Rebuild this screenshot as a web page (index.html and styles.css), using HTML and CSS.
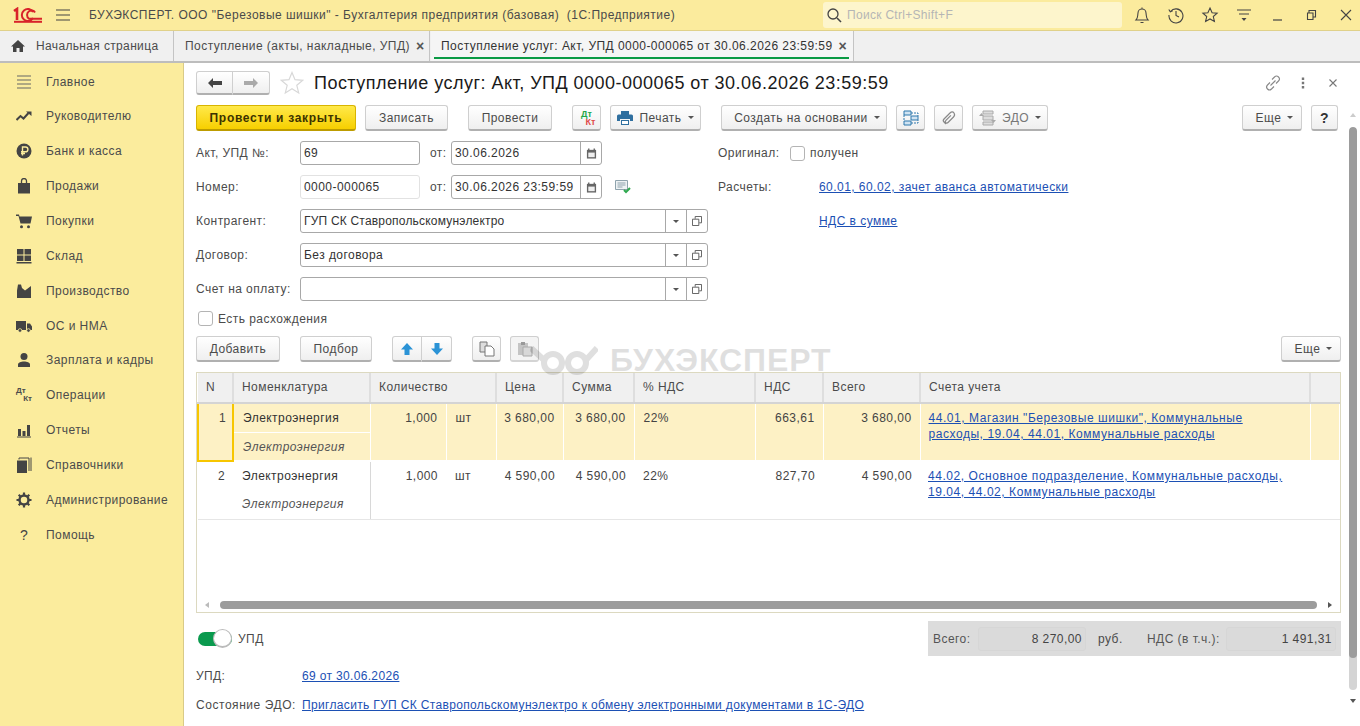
FILE: index.html
```html
<!DOCTYPE html>
<html lang="ru">
<head>
    <meta charset="UTF-8">
    <title>Поступление услуг</title>
    <link rel="stylesheet" href="styles.css">
</head>
<body>
<header class="topbar">
    <svg class="logo" width="30" height="16" viewBox="0 0 30 16"><g fill="none" stroke="#d8232a" stroke-width="2"><path d="M1 4l3-2v11" stroke-width="2.600"/><path d="M20 5a6 6 0 1 0 0 6"/><path d="M22 5.500a4 4 0 0 0-6-1.200a4.500 4.500 0 0 0 0 7.400h13"/><path d="M1 14.800h28"/></g></svg>
    <svg class="burger" width="16" height="12" viewBox="0 0 16 12"><path d="M1 1h14M1 6h14M1 11h14" stroke="#444" stroke-width="1.200"/></svg>
    <span class="app-title">БУХЭКСПЕРТ. ООО "Березовые шишки" - Бухгалтерия предприятия (базовая)&nbsp; (1С:Предприятие)</span>
    <div class="search">
        <svg width="16" height="16" viewBox="0 0 16 16"><circle cx="7" cy="7" r="5" fill="none" stroke="#444" stroke-width="1.300"/><path d="M11 11l4 4" stroke="#444" stroke-width="1.600"/></svg>
        <span>Поиск Ctrl+Shift+F</span>
    </div>
    <div class="top-icons">
        <svg width="18" height="18" viewBox="0 0 18 18"><path d="M3 14c2-2 1.500-4 2-7a4 4 0 0 1 8 0c.5 3 0 5 2 7zM7.500 16.500h3M9 1.500v1.500" fill="none" stroke="#444" stroke-width="1.100"/></svg>
        <svg width="18" height="18" viewBox="0 0 18 18"><path d="M3.500 5.500A7 7 0 1 1 2 9M1.800 3.500l1.500 2.300 2.400-1M9 5v4.500l3 1.500" fill="none" stroke="#444" stroke-width="1.100"/></svg>
        <svg width="18" height="18" viewBox="0 0 18 18"><path d="M9 2l2.100 4.700 5 .5-3.800 3.300 1.100 5L9 13l-4.400 2.500 1.100-5L1.900 7.200l5-.5z" fill="none" stroke="#444" stroke-width="1.100"/></svg>
        <svg width="18" height="18" viewBox="0 0 18 18"><path d="M2 4h14M4 8h10" stroke="#444" stroke-width="1.100"/><path d="M6.500 12h5L9 15z" fill="#444"/></svg>
        <svg width="18" height="18" viewBox="0 0 18 18"><path d="M4 14h9" stroke="#444" stroke-width="1.200"/></svg>
        <svg width="18" height="18" viewBox="0 0 18 18"><path d="M6 7V4.500h6.500V11H10M4.500 7H10v6.500H4.500z" fill="none" stroke="#444" stroke-width="1.100"/></svg>
        <svg width="18" height="18" viewBox="0 0 18 18"><path d="M4 4l10 10M14 4L4 14" stroke="#444" stroke-width="1.100"/></svg>
    </div>
</header>

<nav class="tabs">
    <div class="tab tab-home">
        <svg width="14" height="14" viewBox="0 0 14 14"><path d="M7 1L0 7.500h2V13h3.500V9h3v4H12V7.500h2z" fill="#444"/></svg>
        <span>Начальная страница</span>
    </div>
    <div class="tab tab-list"><span>Поступление (акты, накладные, УПД)</span><i class="tab-close">×</i></div>
    <div class="tab tab-active"><span>Поступление услуг: Акт, УПД 0000-000065 от 30.06.2026 23:59:59</span><i class="tab-close">×</i></div>
</nav>

<div class="content">
    <aside class="sidebar">
        <div class="side-item"><svg viewBox="0 0 16 16"><path d="M1 2h14M1 6h14M1 10h14M1 14h14" stroke="#666" stroke-width="1.200"/></svg><span>Главное</span></div>
        <div class="side-item"><svg viewBox="0 0 16 16"><path d="M0.500 12l4-4 3 2.500 5-5.500" fill="none" stroke="#444" stroke-width="2"/><path d="M10 3.500h5.500v4.500z" fill="#444"/></svg><span>Руководителю</span></div>
        <div class="side-item"><svg viewBox="0 0 16 16"><circle cx="8" cy="8" r="7.500" fill="#444"/><path d="M6.500 12.500V4h3a2.200 2.200 0 0 1 0 4.800h-4.500M5 10.500h4" fill="none" stroke="#fbec9d" stroke-width="1.400"/></svg><span>Банк и касса</span></div>
        <div class="side-item"><svg viewBox="0 0 16 16"><path d="M2 5h12v10.500H2z" fill="#444"/><path d="M5.500 7V3a2.500 2.500 0 0 1 5 0v4" fill="none" stroke="#444" stroke-width="1.300"/></svg><span>Продажи</span></div>
        <div class="side-item"><svg viewBox="0 0 16 16"><path d="M0 1.500h3l.5 2h12.500l-1.500 7h-10L2.500 3H0z" fill="#444"/><circle cx="5.500" cy="13.800" r="1.500" fill="#444"/><circle cx="12.500" cy="13.800" r="1.500" fill="#444"/></svg><span>Покупки</span></div>
        <div class="side-item"><svg viewBox="0 0 16 16"><path d="M1 1h6.500v5.500H1zM8.500 1H15v5.500H8.500zM1 7.500h6.500V13H1zM8.500 7.500H15V13H8.500zM0.500 14h15v1.500H.5z" fill="#444"/></svg><span>Склад</span></div>
        <div class="side-item"><svg viewBox="0 0 16 16"><path d="M1 15V7.500l1-6h3l1 3.500 3 2.500L15 3v12z" fill="#444"/></svg><span>Производство</span></div>
        <div class="side-item"><svg viewBox="0 0 16 16"><path d="M0 3h10v9H0zM11 5.500h3l2 3V12h-5z" fill="#444"/><circle cx="4" cy="12.500" r="1.800" fill="#444" stroke="#fbec9d" stroke-width=".8"/><circle cx="12.500" cy="12.500" r="1.800" fill="#444" stroke="#fbec9d" stroke-width=".8"/></svg><span>ОС и НМА</span></div>
        <div class="side-item"><svg viewBox="0 0 16 16"><circle cx="8" cy="4.500" r="3.500" fill="#444"/><path d="M2 15v-2.500c0-2 3-3 6-3s6 1 6 3V15z" fill="#444"/></svg><span>Зарплата и кадры</span></div>
        <div class="side-item"><div class="dtkt"><b>Дт</b><b>Кт</b></div><span>Операции</span></div>
        <div class="side-item"><svg viewBox="0 0 16 16"><path d="M2 7h3v7H2zM6.500 9h3v5h-3zM11 3h3v11h-3zM1 14.500h14v1H1z" fill="#444"/></svg><span>Отчеты</span></div>
        <div class="side-item"><svg viewBox="0 0 16 16"><path d="M1 3.500h10V16H1z" fill="#444"/><path d="M3 2.500V1h10v13M15 .5V14" fill="none" stroke="#444"/></svg><span>Справочники</span></div>
        <div class="side-item"><svg viewBox="0 0 16 16"><circle cx="8" cy="8" r="4.500" fill="none" stroke="#444" stroke-width="2.500"/><path d="M8 0.500v3M8 12.500v3M.5 8h3M12.500 8h3M2.700 2.700l2 2M11.300 11.300l2 2M13.300 2.700l-2 2M4.700 11.300l-2 2" stroke="#444" stroke-width="2.200"/></svg><span>Администрирование</span></div>
        <div class="side-item"><b class="side-help">?</b><span>Помощь</span></div>
    </aside>

    <main class="doc-wrap">
        <div class="watermark">
            <svg width="68" height="30" viewBox="0 0 68 30"><g fill="none" stroke="#000" stroke-width="6"><circle cx="23" cy="17" r="9"/><circle cx="47" cy="17" r="9"/><path d="M14 14L1 2M56 14L67 2"/></g></svg>
            <span>БУХЭКСПЕРТ</span>
        </div>
        <div class="doc">
            <div class="title-bar">
                <div class="btn-pair nav-pair">
                    <button class="btn"><svg width="14" height="10" viewBox="0 0 14 10"><path d="M0 5l5-5v3h9v4H5v3z" fill="#444"/></svg></button>
                    <button class="btn"><svg width="14" height="10" viewBox="0 0 14 10"><path d="M14 5L9 0v3H0v4h9v3z" fill="#aaa"/></svg></button>
                </div>
                <svg class="title-star" width="24" height="24" viewBox="0 0 24 24"><path d="M12 1.500l3 7.200 7.800.6-6 5 1.900 7.600L12 17.800l-6.700 4.100 1.900-7.600-6-5 7.800-.6z" fill="none" stroke="#d8d8d8" stroke-width="1.200"/></svg>
                <h1>Поступление услуг: Акт, УПД 0000-000065 от 30.06.2026 23:59:59</h1>
                <div class="title-icons">
                    <svg width="16" height="16" viewBox="0 0 16 16"><path d="M7 4.500l2.500-2.500a2.800 2.800 0 0 1 4 4L11 8.500M9 11.500L6.500 14a2.800 2.800 0 0 1-4-4L5 7.500M5.500 10.500l5-5" fill="none" stroke="#888" stroke-width="1.100"/></svg>
                    <svg width="16" height="16" viewBox="0 0 16 16"><path d="M6.800 2.500h2.400v2.400H6.800zM6.800 6.800h2.400v2.400H6.800zM6.800 11.100h2.400v2.400H6.800z" fill="#777"/></svg>
                    <svg width="16" height="16" viewBox="0 0 16 16"><path d="M4.500 4.500l7 7M11.500 4.500l-7 7" stroke="#777" stroke-width="1.100"/></svg>
                </div>
            </div>

            <div class="toolbar">
                <button class="btn btn-primary w-post">Провести и закрыть</button>
                <button class="btn w-save">Записать</button>
                <button class="btn w-run group">Провести</button>
                <button class="btn btn-icon group"><span class="dtkt color"><b>Дт</b><b>Кт</b></span></button>
                <button class="btn w-print"><svg width="16" height="14" viewBox="0 0 16 14"><path d="M4 0h8v4H4zM0 5a1.500 1.500 0 0 1 1.500-1.500h13A1.500 1.500 0 0 1 16 5v5h-3V8H3v2H0z" fill="#2f6f9f"/><path d="M4 9h8v5H4z" fill="#2f6f9f"/><path d="M5 10h6v3H5z" fill="#fff"/></svg><span>Печать</span><i class="caret"></i></button>
                <button class="btn w-create group"><span>Создать на основании</span><i class="caret"></i></button>
                <button class="btn btn-icon"><svg width="16" height="16" viewBox="0 0 16 16"><path d="M1 1h7v4H1zM8 6h7v4H8zM1 11h7v4H1z" fill="#cfe3f2" stroke="#2f78ad"/><path d="M8 3h7v3M8 13h7v-3M1 5v6" fill="none" stroke="#2f78ad" stroke-dasharray="2 1"/></svg></button>
                <button class="btn btn-icon"><svg width="16" height="16" viewBox="0 0 16 16"><path d="M5 14l-2-2c-1-1-1-2 0-3l6-6c1.500-1.500 3-1.500 4 0s1 2.500-.5 4l-5.500 5.500c-.8.800-1.500.800-2.200.1s-.7-1.400.1-2.200l5-5" fill="none" stroke="#888" stroke-width="1.200"/></svg></button>
                <button class="btn w-edo"><svg width="17" height="16" viewBox="0 0 17 16"><path d="M4 1h10v3H4zM4 6h10v4H4zM4 12h10v3H4z" fill="#ddd" stroke="#aaa"/><path d="M0 6l2.500-3L5 6zM12 10h5l-2.500 3z" fill="#aaa"/></svg><span>ЭДО</span><i class="caret"></i></button>
                <div class="spacer"></div>
                <button class="btn w-more"><span>Еще</span><i class="caret"></i></button>
                <button class="btn btn-help">?</button>
            </div>

            <div class="head">
                <div class="head-left">
                    <div class="row">
                        <label class="lbl">Акт, УПД №:</label>
                        <div class="field w-num">69</div>
                        <label class="lbl-from">от:</label>
                        <div class="field w-date"><span class="val">30.06.2026</span><span class="fbtn"><svg width="11" height="11" viewBox="0 0 12 12"><path d="M1 2h10v9.500H1z" fill="#666"/><path d="M2.500 5h7v5h-7z" fill="#eee"/><path d="M3 .5v2M9 .5v2" stroke="#666" stroke-width="1.500"/></svg></span></div>
                    </div>
                    <div class="row">
                        <label class="lbl">Номер:</label>
                        <div class="field w-num field-soft">0000-000065</div>
                        <label class="lbl-from">от:</label>
                        <div class="field w-date"><span class="val">30.06.2026 23:59:59</span><span class="fbtn"><svg width="11" height="11" viewBox="0 0 12 12"><path d="M1 2h10v9.500H1z" fill="#666"/><path d="M2.500 5h7v5h-7z" fill="#eee"/><path d="M3 .5v2M9 .5v2" stroke="#666" stroke-width="1.500"/></svg></span></div>
                        <svg class="note-ok" width="16" height="14" viewBox="0 0 16 14"><path d="M.5.500h12v9h-12z" fill="#eef2f4" stroke="#8fa3ad"/><path d="M2.500 3h8M2.500 5h8M2.500 7h5" stroke="#8fa3ad"/><path d="M9 10l2 2 4-4" fill="none" stroke="#2fa84f" stroke-width="2"/></svg>
                    </div>
                    <div class="row">
                        <label class="lbl">Контрагент:</label>
                        <div class="field w-select"><span class="val val-tight">ГУП СК Ставропольскомунэлектро</span><span class="fbtn fbtn-caret"><i class="caret"></i></span><span class="fbtn fbtn-open"><svg width="10" height="10" viewBox="0 0 11 11"><path d="M3.500 3V.5h7v7H8M.5 3.500h7v7h-7z" fill="none" stroke="#555"/></svg></span></div>
                    </div>
                    <div class="row">
                        <label class="lbl">Договор:</label>
                        <div class="field w-select"><span class="val">Без договора</span><span class="fbtn fbtn-caret"><i class="caret"></i></span><span class="fbtn fbtn-open"><svg width="10" height="10" viewBox="0 0 11 11"><path d="M3.500 3V.5h7v7H8M.5 3.500h7v7h-7z" fill="none" stroke="#555"/></svg></span></div>
                    </div>
                    <div class="row">
                        <label class="lbl">Счет на оплату:</label>
                        <div class="field w-select"><span class="val"></span><span class="fbtn fbtn-caret"><i class="caret"></i></span><span class="fbtn fbtn-open"><svg width="10" height="10" viewBox="0 0 11 11"><path d="M3.500 3V.5h7v7H8M.5 3.500h7v7h-7z" fill="none" stroke="#555"/></svg></span></div>
                    </div>
                    <div class="row row-check">
                        <span class="check"></span>
                        <span class="check-text">Есть расхождения</span>
                    </div>
                </div>
                <div class="head-right">
                    <div class="row">
                        <label class="lbl-right lbl-orig">Оригинал:</label>
                        <span class="check"></span>
                        <span class="check-text">получен</span>
                    </div>
                    <div class="row">
                        <label class="lbl-right">Расчеты:</label>
                        <a class="link" href="#">60.01, 60.02, зачет аванса автоматически</a>
                    </div>
                    <div class="row">
                        <label class="lbl-right"></label>
                        <a class="link" href="#">НДС в сумме</a>
                    </div>
                </div>
            </div>

            <div class="toolbar table-tools">
                <button class="btn w-add">Добавить</button>
                <button class="btn w-pick group">Подбор</button>
                <div class="btn-pair arrows group">
                    <button class="btn"><svg width="14" height="14" viewBox="0 0 14 14"><path d="M7 1l6 6.500H9.500V13h-5V7.500H1z" fill="#2b93d6"/></svg></button>
                    <button class="btn"><svg width="14" height="14" viewBox="0 0 14 14"><path d="M7 13L1 6.500h3.500V1h5v5.500H13z" fill="#2b93d6"/></svg></button>
                </div>
                <button class="btn btn-icon group"><svg width="16" height="16" viewBox="0 0 16 16"><path d="M1 1h7v10H1z" fill="#ddd" stroke="#777"/><path d="M6 5h6l3 3v7H6z" fill="#fff" stroke="#777"/></svg></button>
                <button class="btn btn-icon btn-off"><svg width="16" height="16" viewBox="0 0 16 16"><path d="M1 2h10v12H1z" fill="#c4c4c4"/><path d="M4 1h4v3H4z" fill="#999"/><path d="M6 6h9v9H6z" fill="#d8d8d8" stroke="#aaa"/></svg></button>
                <div class="spacer"></div>
                <button class="btn w-more"><span>Еще</span><i class="caret"></i></button>
            </div>

            <div class="grid-box">
                <table class="grid">
                    <colgroup>
                        <col class="c-n"><col class="c-name"><col class="c-qty"><col class="c-unit"><col class="c-price"><col class="c-sum"><col class="c-rate"><col class="c-vat"><col class="c-total"><col class="c-acc"><col>
                    </colgroup>
                    <thead>
                        <tr><th>N</th><th>Номенклатура</th><th colspan="2">Количество</th><th>Цена</th><th>Сумма</th><th>% НДС</th><th>НДС</th><th>Всего</th><th>Счета учета</th><th></th></tr>
                    </thead>
                    <tbody>
                        <tr class="sel">
                            <td rowspan="2" class="num cur">1</td><td class="name">Электроэнергия</td>
                            <td rowspan="2" class="num">1,000</td><td rowspan="2">шт</td>
                            <td rowspan="2" class="num">3 680,00</td><td rowspan="2" class="num">3 680,00</td>
                            <td rowspan="2">22%</td><td rowspan="2" class="num">663,61</td><td rowspan="2" class="num">3 680,00</td>
                            <td rowspan="2" class="acc"><a class="link" href="#">44.01, Магазин "Березовые шишки", Коммунальные расходы, 19.04, 44.01, Коммунальные расходы</a></td>
                            <td rowspan="2"></td>
                        </tr>
                        <tr class="sel"><td class="name sub">Электроэнергия</td></tr>
                        <tr class="plain">
                            <td rowspan="2" class="num">2</td><td class="name">Электроэнергия</td>
                            <td rowspan="2" class="num">1,000</td><td rowspan="2">шт</td>
                            <td rowspan="2" class="num">4 590,00</td><td rowspan="2" class="num">4 590,00</td>
                            <td rowspan="2">22%</td><td rowspan="2" class="num">827,70</td><td rowspan="2" class="num">4 590,00</td>
                            <td rowspan="2" class="acc"><a class="link" href="#">44.02, Основное подразделение, Коммунальные расходы, 19.04, 44.02, Коммунальные расходы</a></td>
                            <td rowspan="2"></td>
                        </tr>
                        <tr class="plain"><td class="name sub">Электроэнергия</td></tr>
                    </tbody>
                </table>
                <div class="hscroll">
                    <i class="arr arr-left"></i>
                    <div class="hthumb"></div>
                    <i class="arr arr-right"></i>
                </div>
            </div>

            <div class="bottom">
                <div class="switch-wrap">
                    <span class="switch"><i></i></span>
                    <span>УПД</span>
                </div>
                <div class="totals">
                    <span class="t-lbl t-all">Всего:</span>
                    <span class="t-val t-sum">8 270,00</span>
                    <span class="t-cur">руб.</span>
                    <span class="t-lbl t-vat">НДС (в т.ч.):</span>
                    <span class="t-val t-vatval">1 491,31</span>
                </div>
            </div>

            <div class="foot-row foot-upd"><label>УПД:</label><a class="link" href="#">69 от 30.06.2026</a></div>
            <div class="foot-row foot-edo"><label>Состояние ЭДО:</label><a class="link" href="#">Пригласить ГУП СК Ставропольскомунэлектро к обмену электронными документами в 1С-ЭДО</a></div>
        </div>

        <div class="vscroll">
            <i class="varr varr-up"></i>
            <div class="vtrack"><div class="vthumb"></div></div>
            <i class="varr varr-down"></i>
        </div>
    </main>
</div>
</body>
</html>
```

FILE: styles.css
```css
* {
    box-sizing: border-box;
}

html, body {
    margin: 0;
    height: 100%;
    overflow: hidden;
}

body {
    font-family: "Liberation Sans", Arial, sans-serif;
    font-size: 12px;
    letter-spacing: 0.45px;
    color: #4b4b4b;
    background: #fff;
    display: flex;
    flex-direction: column;
}

button {
    font: inherit;
    letter-spacing: inherit;
    color: inherit;
}

/* top bar */
.topbar {
    height: 31px;
    flex: none;
    display: flex;
    align-items: center;
    background: #fbeb9d;
    border-bottom: 1px solid #e0d18a;
    padding-left: 13px;
}

.logo {
    margin-right: 12px;
}

.burger {
    margin-right: 18px;
}

.app-title {
    color: #4a4a4a;
    width: 734px;
    white-space: nowrap;
    letter-spacing: 0.48px;
}

.search {
    width: 299px;
    height: 26px;
    background: #fdf5cc;
    border-radius: 3px;
    display: flex;
    align-items: center;
    gap: 5px;
    padding-left: 3px;
    color: #b5b5b5;
    letter-spacing: 0.3px;
}

.top-icons {
    display: flex;
    align-items: center;
    margin-left: 11px;
    gap: 16px;
}

/* tabs */
.tabs {
    height: 32px;
    flex: none;
    display: flex;
    background: #f0f0f0;
    border-bottom: 2px solid #bdbdbd;
}

.tab {
    display: flex;
    align-items: center;
    border-right: 1px solid #c4c4c4;
    white-space: nowrap;
    position: relative;
    margin-right: 1px;
}

.tab-home {
    width: 174px;
    padding-left: 11px;
    gap: 11px;
    letter-spacing: 0.35px;
}

.tab-list {
    width: 255px;
    padding-left: 10px;
}

.tab-active {
    width: 423px;
    padding-left: 10px;
    background: #f5f5f5;
    color: #333;
}

.tab-active::after {
    content: "";
    position: absolute;
    left: 3px;
    right: 4px;
    bottom: 2px;
    height: 2px;
    background: #0a9a44;
}

.tab-close {
    font-style: normal;
    font-weight: bold;
    font-size: 14px;
    margin-left: 6px;
    color: #555;
}

/* sidebar */
.content {
    flex: 1;
    display: flex;
    min-height: 0;
}

.sidebar {
    width: 184px;
    flex: none;
    background: #fbec9d;
    border-right: 1px solid #d9cb88;
    padding-top: 1.200px;
}

.side-item {
    height: 34.85px;
    display: flex;
    align-items: center;
    padding-left: 16px;
    gap: 14px;
    white-space: nowrap;
}

.side-item svg {
    width: 16px;
    height: 16px;
    flex: none;
}

.dtkt {
    width: 16px;
    flex: none;
    display: flex;
    flex-direction: column;
    font-size: 8px;
    line-height: 8px;
    letter-spacing: 0;
}

.dtkt b + b {
    align-self: flex-end;
}

.dtkt.color {
    font-size: 9px;
    width: 18px;
}

.dtkt.color b {
    color: #1ea84a;
}

.dtkt.color b + b {
    color: #e04a4a;
}

.side-help {
    width: 16px;
    text-align: center;
    font-size: 14px;
    color: #444;
    font-weight: normal;
}

/* document */
.doc-wrap {
    flex: 1;
    display: flex;
    position: relative;
    min-width: 0;
}

.doc {
    width: 1157px;
    padding: 8px 0 0 12px;
    flex: none;
}

.title-bar {
    height: 24px;
    display: flex;
    align-items: center;
}

.title-star {
    margin-left: 10px;
    margin-right: 10px;
}

h1 {
    margin: 0;
    font-size: 18px;
    font-weight: normal;
    color: #1a1a1a;
    white-space: nowrap;
    letter-spacing: 0.47px;
}

.title-icons {
    margin-left: auto;
    display: flex;
    gap: 14px;
}

.btn {
    height: 26px;
    padding: 0;
    background: linear-gradient(#fff, #efefef);
    border: 1px solid #cfcfcf;
    border-bottom: 2px solid #b0b0b0;
    border-radius: 3px;
    display: inline-flex;
    align-items: center;
    justify-content: center;
    gap: 6px;
    flex: none;
}

.btn-primary {
    background: linear-gradient(#ffe94a, #f7cf00);
    border-color: #d8b400;
    border-bottom-color: #bd9c00;
    color: #3c3300;
    font-weight: bold;
    letter-spacing: 0.7px;
}

.btn-pair {
    display: flex;
    flex: none;
}

.btn-pair .btn:first-child {
    border-radius: 3px 0 0 3px;
}

.btn-pair .btn:last-child {
    border-radius: 0 3px 3px 0;
    border-left: 0;
}

.nav-pair .btn {
    width: 37px;
    height: 24px;
}

.arrows .btn {
    width: 30px;
}

.toolbar {
    display: flex;
    height: 26px;
    margin-top: 10px;
    gap: 9px;
}

.group {
    margin-left: 11px;
}

.spacer {
    flex: 1;
}

.w-post { width: 160px; }
.w-save { width: 83px; }
.w-run { width: 84px; }
.btn-icon { width: 29px; }
.w-print { width: 91px; }
.w-create { width: 166px; padding-left: 6px; }
.w-edo { width: 76px; color: #777; }
.w-more { width: 60px; padding-left: 5px; }
.btn-help { width: 27px; margin-right: 3px; font-weight: bold; font-size: 14px; color: #333; }
.w-add { width: 84px; }
.w-pick { width: 72px; }

.btn-off {
    background: #f4f4f4;
    border-bottom-color: #d4d4d4;
}

.caret {
    display: inline-block;
    width: 0;
    height: 0;
    border-left: 3px solid transparent;
    border-right: 3px solid transparent;
    border-top: 3px solid #555;
}

/* header fields */
.head {
    display: flex;
    margin-top: 10px;
}

.head-left {
    width: 522px;
}

.row {
    height: 24px;
    display: flex;
    align-items: center;
    margin-bottom: 10px;
    white-space: nowrap;
}

.row-check {
    height: 15px;
    margin-bottom: 0;
    padding-left: 2px;
}

.lbl {
    width: 104px;
    flex: none;
}

.lbl-from {
    width: 31px;
    padding-left: 10px;
    flex: none;
}

.lbl-right {
    width: 101px;
    flex: none;
}

.lbl-orig {
    width: 72px;
}

.field {
    height: 24px;
    background: #fff;
    border: 1px solid #a8a8a8;
    border-radius: 3px;
    display: flex;
    align-items: center;
    padding-left: 3px;
    color: #333;
    flex: none;
}

.field-soft {
    border-color: #e2e2e2;
}

.w-num { width: 120px; }
.w-date { width: 151px; }
.w-select { width: 408px; }

.val {
    flex: 1;
    overflow: hidden;
}

.val-tight {
    letter-spacing: 0.2px;
}

.fbtn {
    width: 21px;
    height: 22px;
    border-left: 1px solid #a8a8a8;
    display: flex;
    align-items: center;
    justify-content: center;
    flex: none;
}

.note-ok {
    margin-left: 13px;
}

.check {
    width: 15px;
    height: 15px;
    border: 1px solid #b4b4b4;
    border-radius: 3px;
    background: #fff;
    flex: none;
}

.check-text {
    margin-left: 5px;
}

.link {
    color: #1c50b4;
    text-decoration: underline;
}

/* table */
.table-tools {
    margin-top: 10px;
}

.grid-box {
    margin-top: 10px;
    height: 241px;
    border: 1px solid #dcd9c0;
    display: flex;
    flex-direction: column;
    justify-content: space-between;
}

.grid {
    width: 100%;
    table-layout: fixed;
    border-collapse: collapse;
}

.c-n { width: 35px; }
.c-name { width: 137px; }
.c-qty { width: 76px; }
.c-unit { width: 50px; }
.c-price { width: 67px; }
.c-sum { width: 71px; }
.c-rate { width: 121px; }
.c-vat { width: 68px; }
.c-total { width: 97px; }
.c-acc { width: 390px; }

.grid th {
    height: 30px;
    background: #f0f0f0;
    font-weight: normal;
    text-align: left;
    padding: 0 7px 2px 8px;
    border-right: 2px solid #dedede;
    border-bottom: 2px solid #d4d4d4;
    white-space: nowrap;
}

.grid th:last-child {
    border-right: 0;
}

.grid td {
    padding: 6px 8px 0 9px;
    vertical-align: top;
    line-height: 16px;
    color: #444;
    white-space: nowrap;
}

.grid .num {
    text-align: right;
    padding-left: 0;
}

.grid td.name {
    height: 29px;
    color: #333;
}

.grid td.sub {
    font-style: italic;
    color: #555;
}

.sel td {
    background: #fdf1c5;
    border-right: 1px solid #fff;
    border-bottom: 2px solid #fff;
}

.sel .name:not(.sub) {
    border-bottom: 1px solid #fff;
}

.sel td.cur {
    border: 2px solid #f7c600;
    padding-right: 6px;
}

.plain td {
    border-bottom: 1px solid #e6e6e6;
}

.plain .name {
    border-right: 1px solid #d8d8d8;
}

.plain .name:not(.sub) {
    border-bottom: 0;
}

.grid td.acc {
    padding: 6px 24px 0 8px;
    letter-spacing: 0.55px;
    white-space: normal;
}

.acc .link {
    display: block;
}

.hscroll {
    height: 12px;
    display: flex;
    align-items: center;
    padding: 0 8px;
    gap: 11px;
    margin-bottom: 1px;
}

.hthumb {
    flex: 1;
    height: 8px;
    background: #9c9c9c;
    border-radius: 4px;
}

.arr {
    width: 0;
    height: 0;
    border-top: 3px solid transparent;
    border-bottom: 3px solid transparent;
}

.arr-left {
    border-right: 4px solid #bbb;
}

.arr-right {
    border-left: 4px solid #555;
}

/* bottom */
.bottom {
    display: flex;
    justify-content: space-between;
    margin-top: 8px;
    height: 35px;
}

.switch-wrap {
    display: flex;
    align-items: center;
    gap: 6px;
    padding-left: 2px;
}

.switch {
    width: 34px;
    height: 14px;
    background: #0a9a4e;
    border-radius: 7px;
    position: relative;
    display: block;
}

.switch i {
    position: absolute;
    right: 0;
    top: -3px;
    width: 19px;
    height: 19px;
    background: #fff;
    border: 1px solid #bbb;
    border-bottom-width: 2px;
    border-radius: 50%;
}

.totals {
    width: 413px;
    background: #dcdcdc;
    display: flex;
    align-items: center;
    padding-left: 5px;
    white-space: nowrap;
}

.t-val {
    height: 24px;
    display: flex;
    align-items: center;
    justify-content: flex-end;
    padding-right: 3px;
    background: #dadada;
    border: 1px solid #d6d6d6;
    border-radius: 3px;
    color: #444;
}

.t-lbl {
    color: #555;
}

.t-all {
    width: 45px;
}

.t-vat {
    width: 79px;
}

.t-sum {
    width: 108px;
}

.t-cur {
    margin-left: 12px;
    width: 49px;
}

.t-vatval {
    width: 110px;
}

.foot-row {
    display: flex;
    white-space: nowrap;
    letter-spacing: 0.34px;
    align-items: center;
    height: 16px;
}

.foot-row label {
    width: 106px;
    flex: none;
}

.foot-upd {
    margin-top: 12px;
}

.foot-edo label {
    letter-spacing: 0.55px;
}

.foot-edo {
    margin-top: 13px;
}

/* right scrollbar */
.vscroll {
    width: 8px;
    margin-left: 8px;
    margin-top: 50px;
    display: flex;
    flex-direction: column;
    align-items: center;
}

.vtrack {
    width: 8px;
    margin-top: 10px;
    height: 563px;
    background: #d4d4d4;
    border-radius: 4px;
    overflow: hidden;
}

.vthumb {
    height: 531px;
    background: #9c9c9c;
    border-radius: 4px;
}

.varr {
    width: 0;
    height: 0;
    border-left: 3px solid transparent;
    border-right: 3px solid transparent;
}

.varr-up {
    border-bottom: 4px solid #ccc;
}

.varr-down {
    margin-top: 9px;
    border-top: 4px solid #555;
}

/* watermark over the form */
.watermark {
    position: absolute;
    left: 346px;
    top: 279px;
    display: flex;
    align-items: center;
    gap: 12px;
    opacity: 0.12;
    font-size: 32px;
    line-height: 37px;
    letter-spacing: 0.9px;
    font-weight: bold;
    color: #000;
    pointer-events: none;
    white-space: nowrap;
}
```
